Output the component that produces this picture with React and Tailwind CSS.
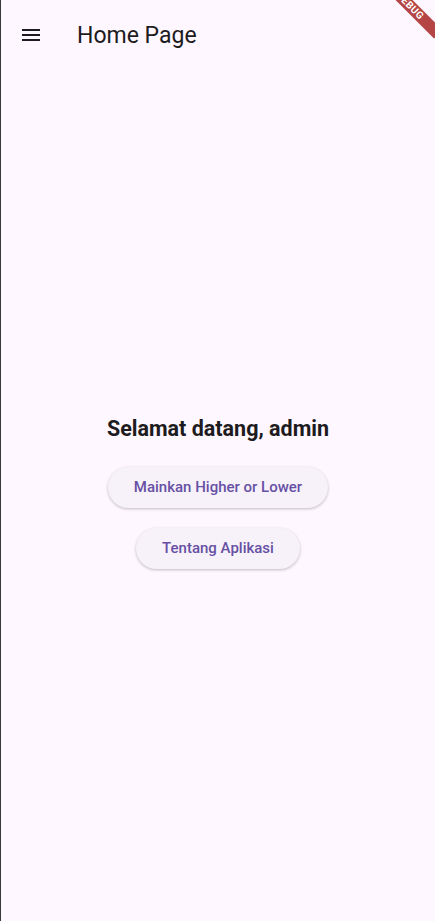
import React from 'react';

function MenuIcon() {
  return (
    <svg width="24" height="24" viewBox="0 0 24 24" fill="#1d1b20">
      <path d="M3 18h18v-2H3v2zm0-5h18v-2H3v2zm0-7v2h18V6H3z" />
    </svg>
  );
}

export default function App() {
  return (
    <div
      className="relative w-[435px] h-[921px] overflow-hidden bg-[#fef7ff] border-l border-[#3a3a3a] flex flex-col"
      style={{ fontFamily: 'Roboto, "Noto Sans", sans-serif' }}
    >
      {/* App bar */}
      <div className="h-[64px] flex items-center pl-[18px] pt-[6px]">
        <button className="w-[24px] h-[24px] flex items-center justify-center">
          <MenuIcon />
        </button>
        <h1 className="ml-[34px] text-[23px] text-[#1d1b20] leading-none">Home Page</h1>
      </div>

      {/* Body */}
      <div className="flex-1 flex flex-col items-center justify-center">
        <h2 className="text-[21.5px] font-bold text-[#1d1b20] leading-[26px]">Selamat datang, admin</h2>
        <button className="mt-[25px] h-[41px] px-[26px] rounded-full bg-[#f7f2fa] text-[#6750a4] text-[15px] font-medium shadow-[0_1px_3px_rgba(0,0,0,0.25)]">
          Mainkan Higher or Lower
        </button>
        <button className="mt-[20px] h-[41px] px-[26px] rounded-full bg-[#f7f2fa] text-[#6750a4] text-[15px] font-medium shadow-[0_1px_3px_rgba(0,0,0,0.25)]">
          Tentang Aplikasi
        </button>
      </div>

      {/* Debug banner */}
      <div className="absolute left-[369px] top-0 w-[80px] h-[12px] rotate-45 bg-[#b54544] flex items-center justify-center">
        <span className="text-[10px] font-bold text-white leading-none tracking-[0.5px]">DEBUG</span>
      </div>
      <div className="absolute left-[-1px] bottom-[6px] w-[1px] h-[16px] bg-[#8a5a44]" />
    </div>
  );
}
